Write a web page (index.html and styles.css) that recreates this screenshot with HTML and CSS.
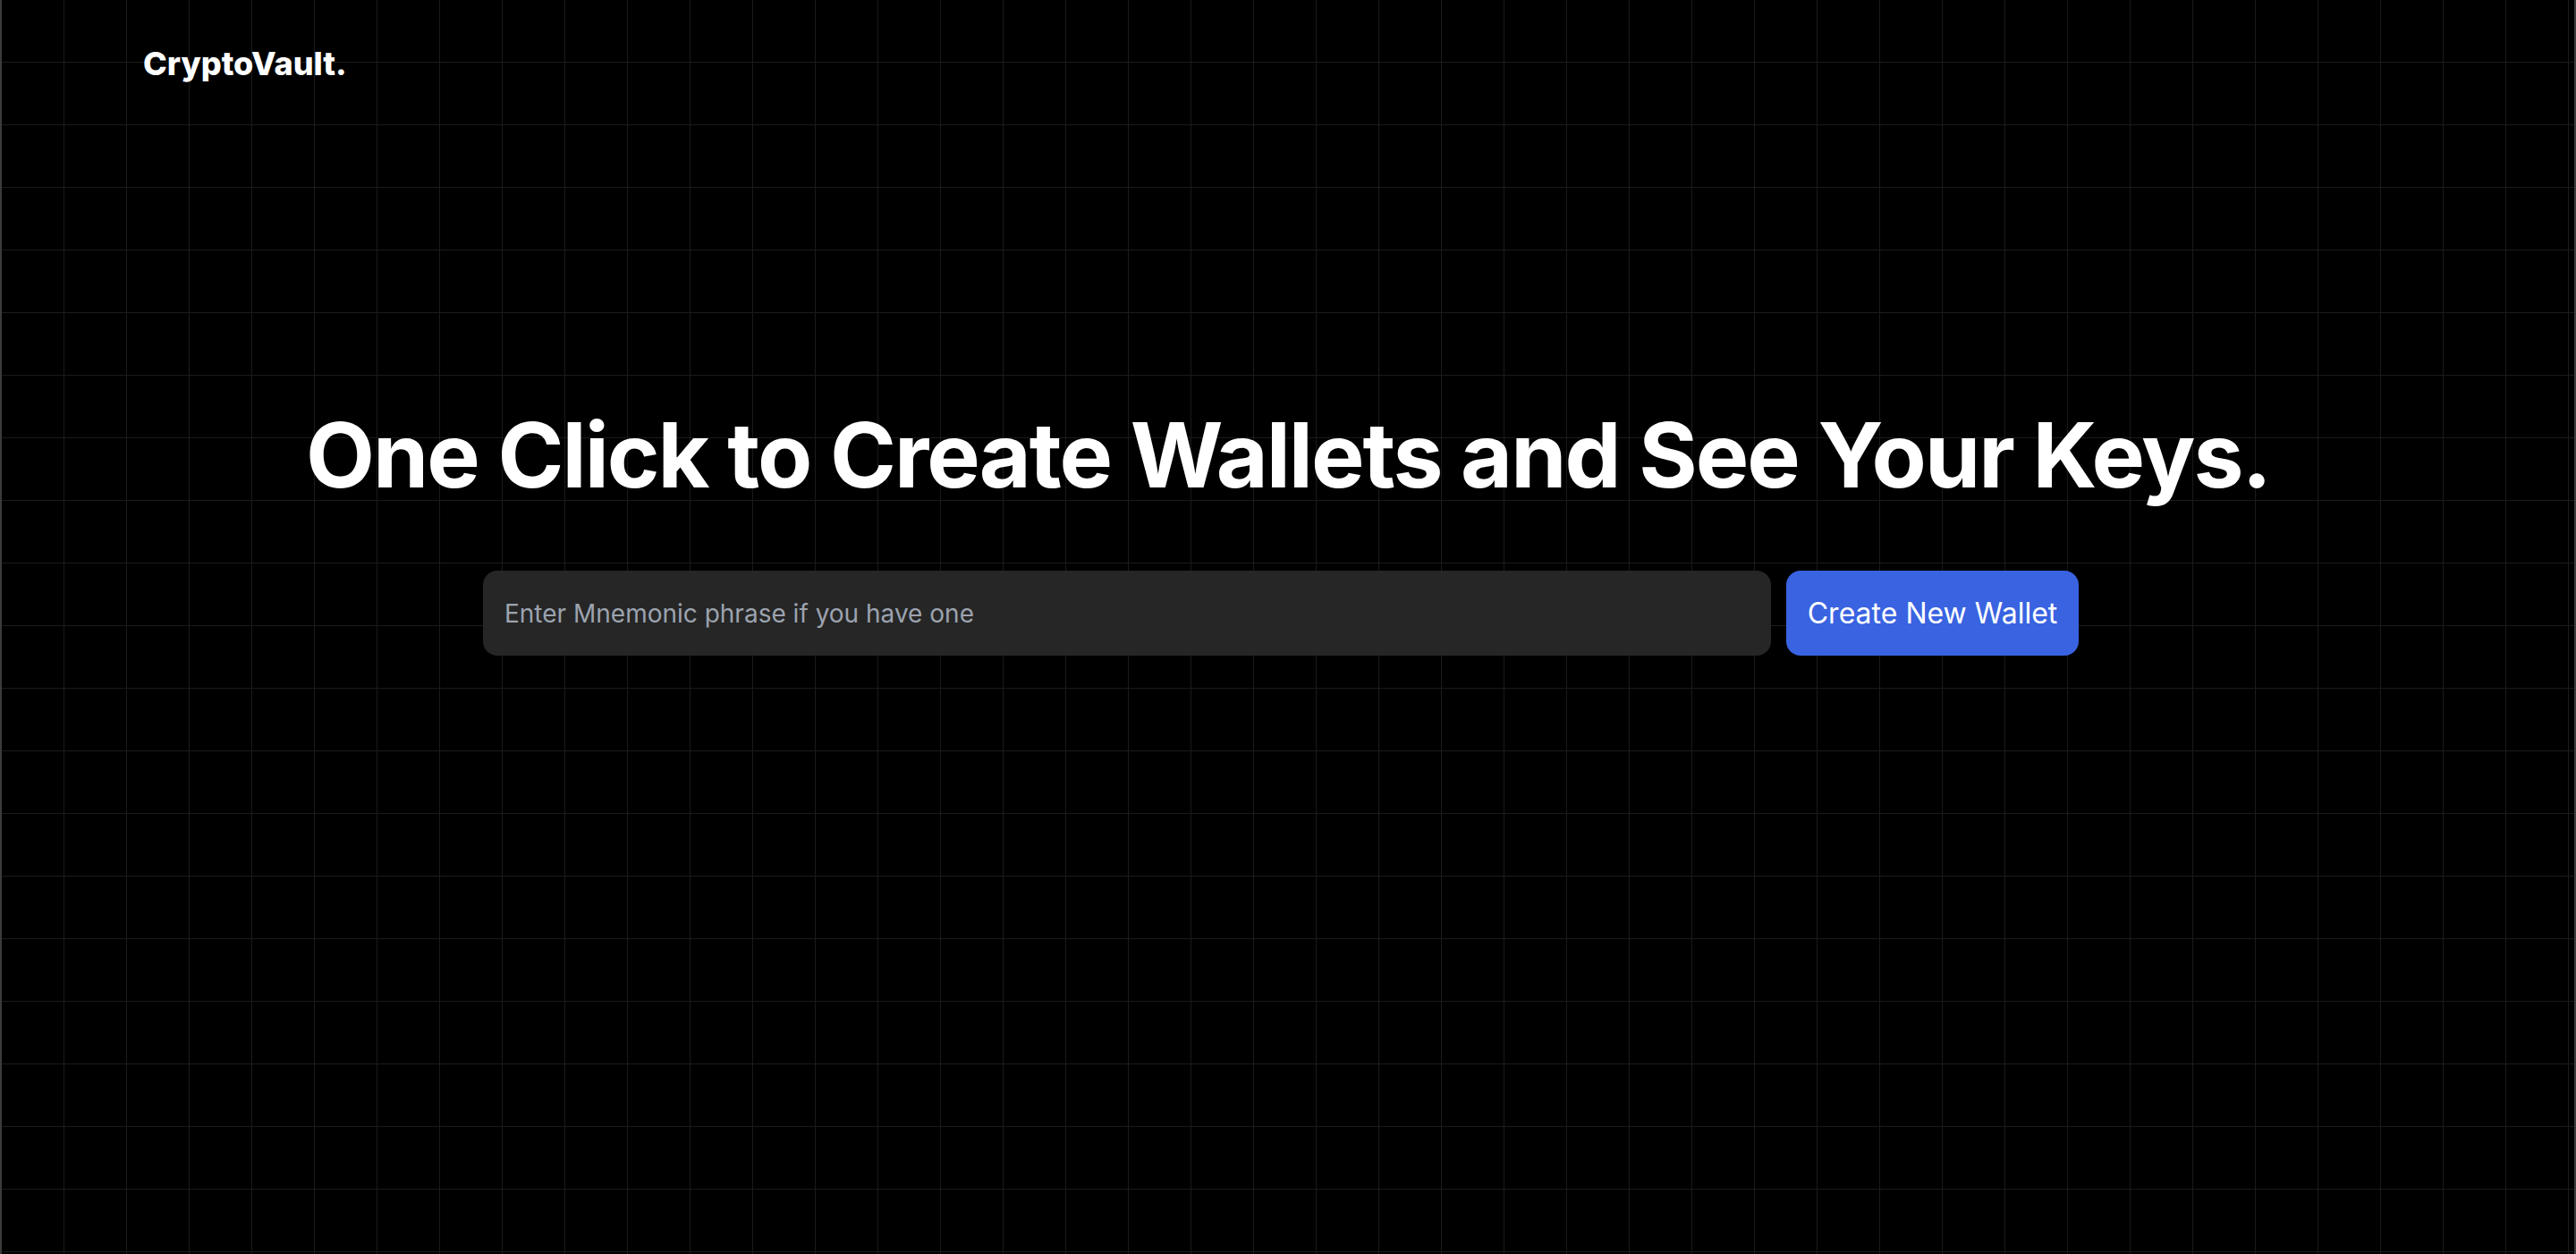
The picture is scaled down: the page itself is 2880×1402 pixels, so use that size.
FILE: index.html
```html
<!DOCTYPE html>
<html lang="en">
<head>
<meta charset="utf-8">
<title>CryptoVault</title>
<link rel="stylesheet" href="styles.css">
</head>
<body>
<div class="page">
  <header class="header">
    <div class="logo">CryptoVault.</div>
  </header>
  <main class="hero">
    <h1 class="title">One Click to Create Wallets and See Your Keys.</h1>
    <form class="wallet-form">
      <input class="mnemonic" type="text" placeholder="Enter Mnemonic phrase if you have one">
      <button class="create-btn" type="button">Create New Wallet</button>
    </form>
  </main>
</div>
</body>
</html>
```

FILE: styles.css
```css
html, body {
  margin: 0;
  padding: 0;
  background: #000;
}

body {
  font-family: Inter, "Noto Sans", sans-serif;
  color: #fff;
}

.page {
  min-height: 1402px;
  box-sizing: border-box;
  background-color: #000;
  background-image:
    linear-gradient(to right, #1b1b1b 1px, transparent 1px),
    linear-gradient(to bottom, #1b1b1b 1px, transparent 1px);
  background-size: 70px 70px;
  background-position: 1px -1px;
  box-shadow: inset 2px 0 0 #3c3c3c, inset -2px 0 0 #3c3c3c;
}

.header {
  padding: 51px 160px 0;
}

.logo {
  font-size: 36px;
  line-height: 40px;
  font-weight: 800;
  letter-spacing: 0;
}

.hero {
  display: flex;
  flex-direction: column;
  align-items: center;
  margin-top: 368px;
}

.title {
  margin: 0;
  font-size: 100px;
  line-height: 100px;
  font-weight: 700;
  letter-spacing: -2px;
  text-align: center;
}

.wallet-form {
  display: flex;
  gap: 17px;
  width: 1784px;
  margin-top: 79px;
  margin-right: 16px;
}

.mnemonic {
  flex: 1;
  height: 95px;
  box-sizing: border-box;
  border: none;
  outline: none;
  border-radius: 16px;
  background: #262626;
  padding: 0 24px;
  font-family: Inter, "Noto Sans", sans-serif;
  font-size: 28px;
  color: #fff;
}

.mnemonic::placeholder {
  color: #9ca3af;
}

.create-btn {
  width: 327px;
  height: 95px;
  border: none;
  border-radius: 16px;
  background: #3963e1;
  color: #fff;
  font-family: Inter, "Noto Sans", sans-serif;
  font-size: 32px;
  font-weight: 400;
  padding: 0;
}
```
